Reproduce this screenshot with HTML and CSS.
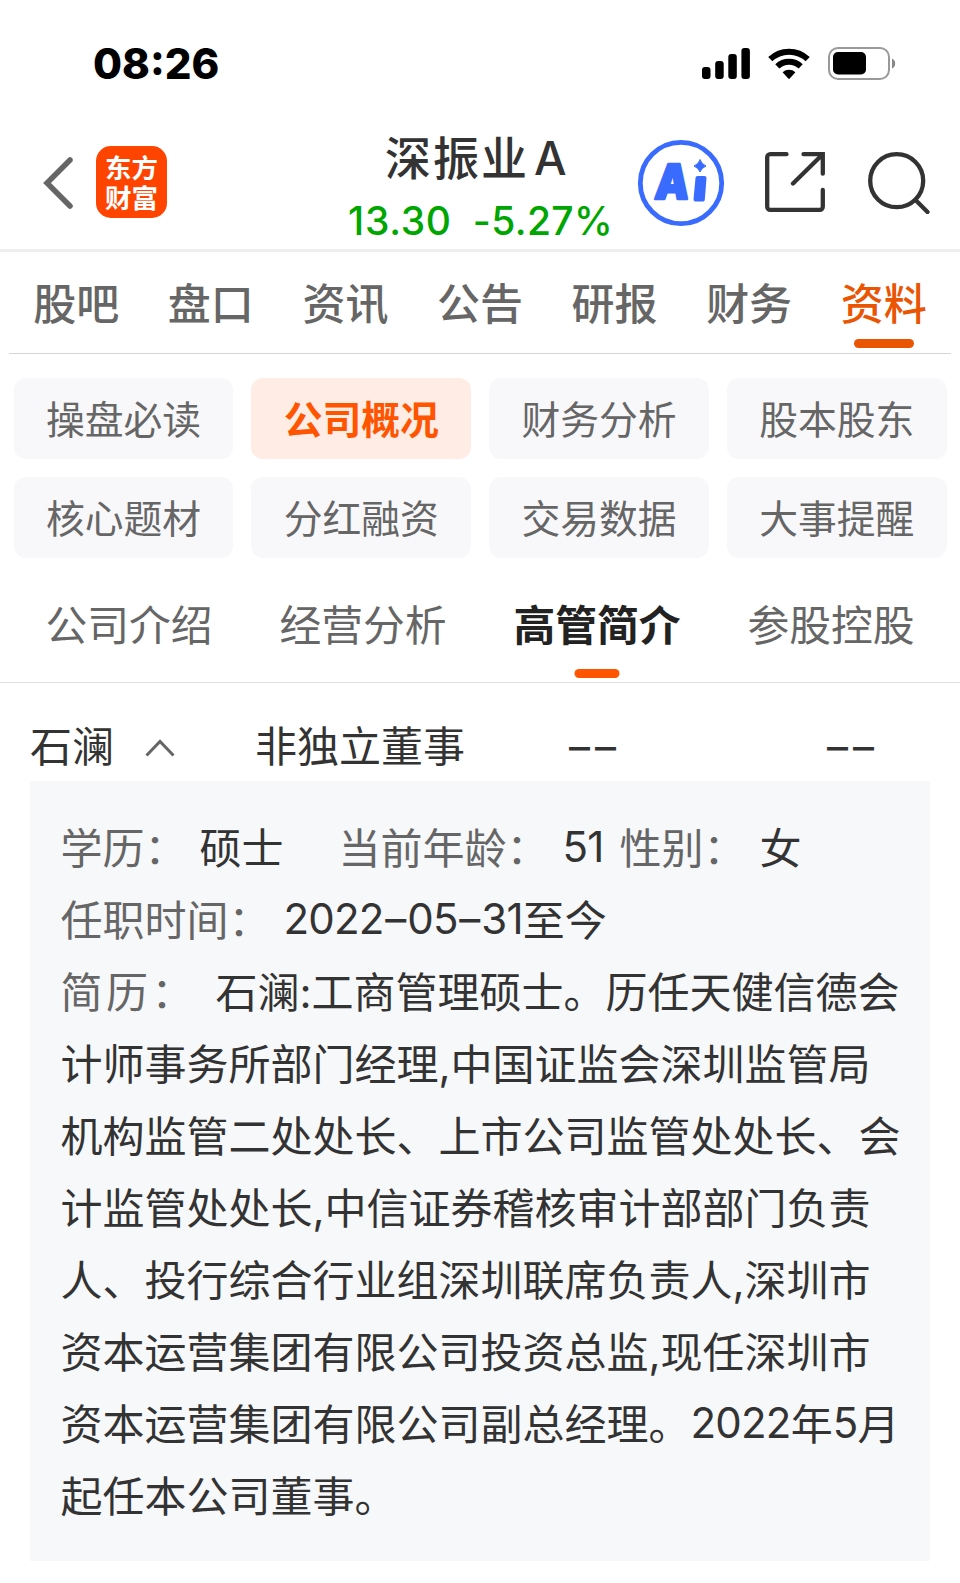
FILE: index.html
```html
<!DOCTYPE html>
<html lang="zh-CN">
<head>
<meta charset="utf-8">
<title>深振业A</title>
<link rel="stylesheet" href="styles.css">
</head>
<body>
<div class="status">
  <span class="clock">08:26</span>
  <div class="status-icons">
    <svg class="signal" width="48" height="32" viewBox="0 0 48 32"><rect x="0" y="19" width="8.500" height="12" rx="3"/><rect x="13.200" y="13" width="8.500" height="18" rx="3"/><rect x="26.300" y="6" width="8.500" height="25" rx="3"/><rect x="39.400" y="0" width="8.500" height="31" rx="3"/></svg>
    <svg class="wifi" width="42" height="32" viewBox="0 0 42 32"><g fill="none" stroke="#000" stroke-width="6"><path d="M2.3 11.2a27 27 0 0 1 37.4 0"/><path d="M9.3 18.4a17 17 0 0 1 23.4 0"/></g><path d="M14.6 24.2a9.500 9.500 0 0 1 12.800 0L22 30.200q-1 1.100-2 0Z"/></svg>
    <svg class="battery" width="68" height="34" viewBox="0 0 68 34"><rect x="1" y="1" width="60" height="31" rx="9" fill="none" stroke="#999" stroke-width="2"/><rect x="5" y="5" width="33" height="22.500" rx="5"/><path d="M64 11.500q3.200 1.500 3.200 5t-3.200 5Z" fill="#888"/></svg>
  </div>
</div>
<header class="header">
  <div class="header-left">
    <svg width="30" height="52" viewBox="0 0 30 52"><path d="M27 3 4 26l23 23" fill="none" stroke="#666" stroke-width="5.500" stroke-linecap="round"/></svg>
    <div class="logo"><span>东方</span><span>财富</span></div>
  </div>
  <div class="quote">
    <div class="name">深振业<span class="name-suffix">A</span></div>
    <div class="price"><span>13.30</span><span class="change">-5.27%</span></div>
  </div>
  <div class="header-right">
    <svg width="88" height="88" viewBox="0 0 88 88"><circle cx="44" cy="44" r="40.700" fill="none" stroke="#3a6bff" stroke-width="4.800"/><text class="ai-letter" transform="translate(17 59.500) skewX(-5) scale(.89 1)">A</text><path d="M60.500 39h7l-1.700 21.500h-7.300Z" fill="#3a6bff" stroke="#3a6bff" stroke-width="4" stroke-linejoin="round"/><path d="M63 20.500q1.600 4.600 6 6.500-4.400 1.900-6 6-1.600-4.100-6-6 4.400-1.900 6-6Z" fill="#3a6bff" stroke="#3a6bff"/></svg>
    <svg class="share" width="60" height="60" viewBox="0 0 60 60"><path d="M21.500 2.200H5.200a3 3 0 0 0-3 3v49.600a3 3 0 0 0 3 3h49.600a3 3 0 0 0 3-3V38M38.500 2.200h19.300v19.500M57 3 28 31.500" fill="none" stroke="#333" stroke-width="4.300" stroke-linecap="round"/></svg>
    <svg class="search" width="62" height="62" viewBox="0 0 62 62"><circle cx="28.700" cy="28.700" r="26.500" fill="none" stroke="#333" stroke-width="4.300"/><path d="m47.500 48 12 12" stroke="#333" stroke-width="4.300" stroke-linecap="round"/></svg>
  </div>
</header>
<nav class="tabs">
  <span>股吧</span><span>盘口</span><span>资讯</span><span>公告</span><span>研报</span><span>财务</span><span class="active">资料</span>
</nav>
<div class="chips">
  <span>操盘必读</span><span class="active">公司概况</span><span>财务分析</span><span>股本股东</span>
  <span>核心题材</span><span>分红融资</span><span>交易数据</span><span>大事提醒</span>
</div>
<nav class="subtabs">
  <span>公司介绍</span><span>经营分析</span><span class="active">高管简介</span><span>参股控股</span>
</nav>
<main>
  <div class="person">
    <span class="person-name">石澜<svg width="32" height="20" viewBox="0 0 32 20"><path d="M2.500 17.500 16 3.500l13.500 14" fill="none" stroke="#666" stroke-width="3"/></svg></span>
    <span class="person-role">非独立董事</span>
    <span class="dash">––</span>
    <span class="dash">––</span>
  </div>
  <section class="card">
    <div class="line"><span class="label">学历：</span><span class="value">硕士</span><span class="label age">当前年龄：</span><span class="value"><span class="num">51</span></span><span class="label gender">性别：</span><span class="value">女</span></div>
    <div class="line"><span class="label">任职时间：</span><span class="value"><span class="num">2022<span class="sep">–</span>05<span class="sep">–</span>31</span>至今</span></div>
    <div class="line"><span class="label wide">简历：</span><span class="value">石澜:工商管理硕士。历任天健信德会</span></div>
    <div class="line">计师事务所部门经理,中国证监会深圳监管局</div>
    <div class="line">机构监管二处处长、上市公司监管处处长、会</div>
    <div class="line">计监管处处长,中信证券稽核审计部部门负责</div>
    <div class="line">人、投行综合行业组深圳联席负责人,深圳市</div>
    <div class="line">资本运营集团有限公司投资总监,现任深圳市</div>
    <div class="line"><span>资本运营集团有限公司副总经理。<span class="num">2022</span>年<span class="num">5</span>月</span></div>
    <div class="line">起任本公司董事。</div>
  </section>
</main>
</body>
</html>
```
FILE: styles.css
```css
* { box-sizing: border-box; }
body {
  margin: 0;
  background: #fff;
  color: #333;
  font-family: Inter, "Noto Sans CJK SC", sans-serif;
  white-space: nowrap;
}
svg { display: block; flex: none; }

.status {
  display: flex;
  justify-content: space-between;
  height: 127px;
  padding: 0 64px 0 93px;
}
.clock {
  margin-top: 34px;
  height: 60px;
  line-height: 60px;
  font-size: 42px;
  font-weight: 800;
  color: #000;
}
.status-icons { display: flex; align-items: flex-start; padding-top: 48px; }
.wifi { margin-left: 18px; }
.battery { margin: -1px 0 0 18px; }

.header {
  display: grid;
  grid-template-columns: 300px 1fr 323px;
  height: 125px;
  border-bottom: 3px solid #eee;
}
.header-left { display: flex; align-items: flex-start; padding: 19px 0 0 43px; }
.header-left svg { margin-top: 11px; }
.logo {
  display: flex;
  flex-direction: column;
  align-items: center;
  width: 71px;
  height: 72px;
  margin-left: 23px;
  padding-top: 7px;
  border-radius: 15px;
  background: #ff4400;
  color: #fff;
  font-size: 26.5px;
  font-weight: 700;
  line-height: 30px;
}
.quote { padding-left: 48px; }
.name {
  padding-left: 37px;
  font-size: 46px;
  font-weight: 500;
  letter-spacing: 2px;
  line-height: 62px;
}
.name-suffix { margin-left: 5px; }
.price {
  display: flex;
  gap: 21px;
  margin-top: 7px;
  font-size: 39px;
  font-weight: 550;
  letter-spacing: 0.7px;
  line-height: 50px;
  color: #00a600;
}
.change { letter-spacing: 0.4px; }
.header-right { display: flex; align-items: flex-start; padding-top: 12px; }
.ai-letter { font: 900 48px Inter, sans-serif; fill: #3a6bff; stroke: #3a6bff; stroke-width: 2.5; stroke-linejoin: round; }
.share { margin: 13px 0 0 40px; }
.search { margin: 13px 0 0 43px; }

.tabs {
  display: grid;
  grid-template-columns: repeat(7, 1fr);
  height: 102px;
  margin: 0 9px;
  border-bottom: 1px solid #d6d6d6;
  text-align: center;
  font-size: 43px;
  font-weight: 500;
  line-height: 104px;
  color: #666;
}
.tabs .active { color: #ea5504; }
.active { position: relative; }
.tabs .active::after, .subtabs .active::after {
  content: "";
  position: absolute;
  left: 50%;
  transform: translateX(-50%);
  width: 60px;
  height: 9px;
  border-radius: 4.5px;
  background: #ea5504;
  top: 87px;
}

.chips {
  display: grid;
  grid-template-columns: repeat(4, 1fr);
  grid-auto-rows: 81px;
  gap: 18px;
  padding: 24px 13.3px 24px 13.7px;
  text-align: center;
  font-size: 38.8px;
  line-height: 83px;
  color: #666;
}
.chips span { border-radius: 12px; background: #f8f8fb; }
.chips .active { background: #ffece5; color: #ff5500; font-weight: 700; }

.subtabs {
  display: grid;
  grid-template-columns: repeat(4, 1fr);
  height: 101px;
  padding: 0 12px;
  border-bottom: 1px solid #e2e2e2;
  text-align: center;
  font-size: 41.8px;
  line-height: 88px;
  color: #666;
}
.subtabs .active { color: #222; font-weight: 700; }
.subtabs .active::after { width: 45px; background: #ff5500; top: 87px; }

.person {
  display: grid;
  grid-template-columns: 225px 314px 258px auto;
  height: 98px;
  padding: 27px 30px 0;
  font-size: 42px;
  line-height: 73px;
}
.person-name { display: flex; align-items: center; }
.person-name svg { margin: 3px 0 0 30px; }
.dash { letter-spacing: 5px; }
.card {
  margin: 0 30px;
  padding: 30px 0 30px 30.5px;
  background: #f7f8fa;
}
.line { display: flex; height: 72px; font-size: 42px; line-height: 75px; white-space: pre; }
.label { margin-right: 13px; color: #666; }
.wide { letter-spacing: 3.5px; margin-right: 18.5px; }
.num { line-height: 1; letter-spacing: -0.8px; vertical-align: 2px; }
.sep { margin: 0 1.7px; }
.age { margin-left: 55px; margin-right: 14px; }
.gender { margin-left: 16px; margin-right: 14px; }
```
